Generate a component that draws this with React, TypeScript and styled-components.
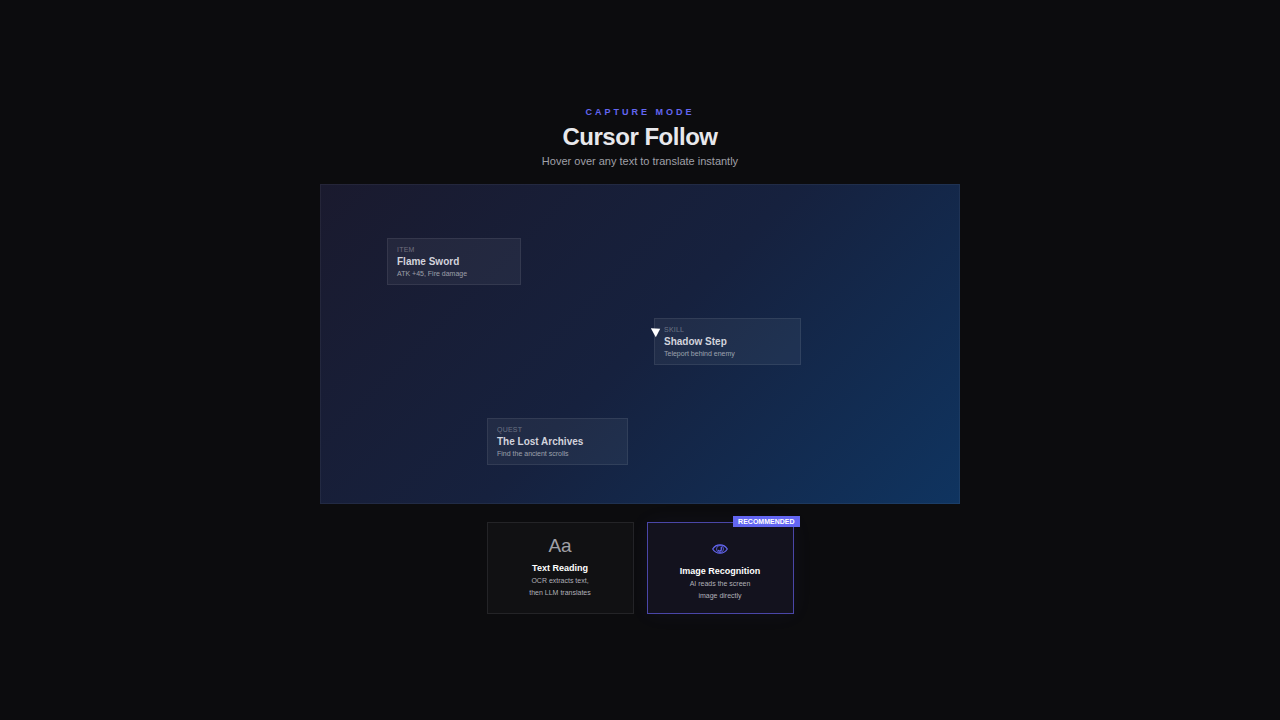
import React from "react";
import styled, { createGlobalStyle } from "styled-components";

const GlobalStyle = createGlobalStyle`
  *, *::before, *::after { box-sizing: border-box; }
  body {
    margin: 0;
    background: #0c0c0e;
    color: #e8e8ec;
    font-family: "Liberation Sans", Arial, sans-serif;
  }
`;

const Page = styled.main`
  min-height: 100vh;
  display: flex;
  flex-direction: column;
  align-items: center;
  justify-content: center;
`;

const Header = styled.header`
  display: flex;
  flex-direction: column;
  align-items: center;
  text-align: center;
  margin-bottom: 15px;
`;

const Eyebrow = styled.p`
  margin: 0 0 5px;
  font-size: 9px;
  line-height: 12px;
  font-weight: 700;
  letter-spacing: 3px;
  color: #6366f1;
`;

const Title = styled.h1`
  margin: 0 0 3px;
  font-size: 24px;
  line-height: 28px;
  font-weight: 700;
  letter-spacing: -0.02em;
  color: #e8e8ec;
`;

const Subtitle = styled.p`
  margin: 0;
  font-size: 11px;
  line-height: 15px;
  color: #a0a0a8;
`;

const Scene = styled.section`
  position: relative;
  width: 50%;
  min-width: 520px;
  aspect-ratio: 2 / 1;
  border: 1px solid rgba(255, 255, 255, 0.05);
  background: linear-gradient(135deg, #1a1a2e 0%, #16213e 50%, #0f3460 100%) border-box;
`;

const SceneCard = styled.article<{ $left: number; $top: number; $width: number }>`
  position: absolute;
  left: ${(p) => p.$left}px;
  top: ${(p) => p.$top}px;
  width: ${(p) => p.$width}px;
  display: flex;
  flex-direction: column;
  padding: 6px 9px;
  border: 1px solid rgba(255, 255, 255, 0.08);
  background: rgba(255, 255, 255, 0.05);
`;

const CardLabel = styled.span`
  font-size: 7px;
  line-height: 9px;
  letter-spacing: 0.03em;
  color: rgba(255, 255, 255, 0.34);
`;

const CardTitle = styled.h2`
  margin: 2px 0 1px;
  font-size: 10px;
  line-height: 12px;
  font-weight: 700;
  color: #d2d3dc;
`;

const CardText = styled.p`
  margin: 0;
  font-size: 7px;
  line-height: 9px;
  color: rgba(255, 255, 255, 0.55);
`;

const Cursor = styled.svg`
  position: absolute;
  left: 330px;
  top: 143px;
  width: 10px;
  height: 10px;
`;

const Options = styled.div`
  display: flex;
  gap: 13px;
  margin-top: 18px;
`;

const Option = styled.button<{ $selected?: boolean }>`
  position: relative;
  width: 147px;
  padding: 12px 12px 11px;
  display: flex;
  flex-direction: column;
  align-items: center;
  justify-content: flex-start;
  font-family: inherit;
  text-align: center;
  cursor: pointer;
  border: 1px solid ${(p) => (p.$selected ? "#4a46a8" : "#242427")};
  background: ${(p) => (p.$selected ? "#13121e" : "#111113")};
  box-shadow: ${(p) => (p.$selected ? "0 0 20px rgba(99, 102, 241, 0.06)" : "none")};
`;

const LetterIcon = styled.span`
  font-size: 19px;
  line-height: 22px;
  margin-bottom: 5px;
  color: #a0a0a6;
`;

const EyeIcon = styled.svg`
  width: 16px;
  height: 10px;
  margin: 9px 0 11px;
`;

const OptionTitle = styled.span`
  font-size: 9px;
  line-height: 12px;
  font-weight: 700;
  margin-bottom: 1px;
  color: #ffffff;
`;

const OptionText = styled.span`
  font-size: 7px;
  line-height: 12px;
  color: #b0b0b8;
`;

const Badge = styled.span`
  position: absolute;
  top: -7px;
  right: -7px;
  padding: 0 5px;
  font-size: 7px;
  line-height: 11px;
  font-weight: 700;
  color: #ffffff;
  background: #6366f1;
`;

const sceneCards = [
  { label: "ITEM", title: "Flame Sword", text: "ATK +45, Fire damage", left: 66, top: 53, width: 134 },
  { label: "SKILL", title: "Shadow Step", text: "Teleport behind enemy", left: 333, top: 133, width: 147 },
  { label: "QUEST", title: "The Lost Archives", text: "Find the ancient scrolls", left: 166, top: 233, width: 141 },
];

export default function App() {
  return (
    <Page>
      <GlobalStyle />
      <Header>
        <Eyebrow>CAPTURE MODE</Eyebrow>
        <Title>Cursor Follow</Title>
        <Subtitle>Hover over any text to translate instantly</Subtitle>
      </Header>
      <Scene>
        {sceneCards.map((c) => (
          <SceneCard key={c.label} $left={c.left} $top={c.top} $width={c.width}>
            <CardLabel>{c.label}</CardLabel>
            <CardTitle>{c.title}</CardTitle>
            <CardText>{c.text}</CardText>
          </SceneCard>
        ))}
        <Cursor viewBox="0 0 10 10" aria-hidden="true">
          <path d="M-.2 .2 9.200 .8 4.800 9.200Z" fill="#fff" />
        </Cursor>
      </Scene>
      <Options>
        <Option type="button" aria-pressed={false}>
          <LetterIcon>Aa</LetterIcon>
          <OptionTitle>Text Reading</OptionTitle>
          <OptionText>
            OCR extracts text,
            <br />
            then LLM translates
          </OptionText>
        </Option>
        <Option type="button" aria-pressed={true} $selected>
          <Badge>RECOMMENDED</Badge>
          <EyeIcon viewBox="0 0 16 10" fill="none" stroke="#6366f1" aria-hidden="true">
            <path d="M.7 5C2.400 2.200 5 .8 8 .8S13.600 2.200 15.300 5C13.600 7.800 11 9.200 8 9.200S2.400 7.800.7 5Z" strokeWidth="1.200" />
            <circle cx="8" cy="5" r="3.500" strokeWidth=".8" />
            <path d="M9.300 3V5.200A1.500 1.500 0 0 1 6.300 5.800" strokeWidth="1.300" />
          </EyeIcon>
          <OptionTitle>Image Recognition</OptionTitle>
          <OptionText>
            AI reads the screen
            <br />
            image directly
          </OptionText>
        </Option>
      </Options>
    </Page>
  );
}
